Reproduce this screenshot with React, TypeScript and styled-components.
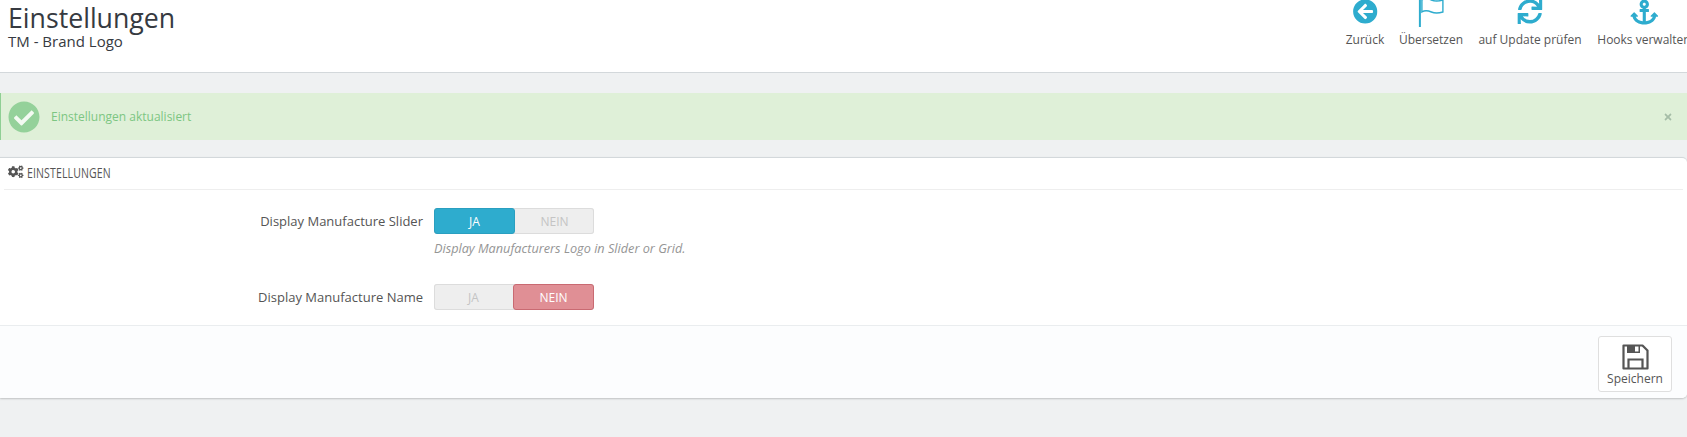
import React from "react";
import styled, { createGlobalStyle } from "styled-components";
import { FaArrowCircleLeft, FaSync, FaAnchor, FaCheckCircle, FaCogs, FaTimes } from "react-icons/fa";

const Global = createGlobalStyle`
  html, body { margin: 0; padding: 0; background: #eff1f2; height: 437px; overflow: hidden; }
  body { font-family: "Open Sans", "DejaVu Sans", sans-serif; font-size: 12px; color: #555; }
`;
const Page = styled.div`width: 1687px; height: 437px; overflow: hidden; display: flex; flex-direction: column;`;
const Header = styled.header`
  height: 72px; flex: none; background: #fff; border-bottom: 1px solid #d3d8db; display: flex;
  justify-content: space-between; overflow: hidden; padding-left: 8px;
`;
const TitleBlock = styled.div`display: flex; flex-direction: column; padding-top: 4px;`;
const Title = styled.h1`margin: 0; font-size: 26.7px; line-height: 28px; height: 27px; font-weight: 400; color: #363a41;`;
const Subtitle = styled.h2`margin: 0; font-size: 15px; line-height: 20px; font-weight: 400; color: #363a41;`;
const Toolbar = styled.nav`display: flex; margin-top: -3px; flex: none; width: 358px; position: relative; height: 60px;`;
const Tool = styled.a`
  display: flex; flex-direction: column; align-items: center; position: absolute; top: 0;
  left: ${(p: { $x: number }) => p.$x}px; transform: translateX(-50%); white-space: nowrap; color: #555;
  font-size: 12px; line-height: 16px;
`;
const ToolIcon = styled.span<{ $size?: number }>`
  color: #2eacce; height: 29px; width: 30px; display: flex; align-items: center; justify-content: center;
  font-size: ${p => p.$size ?? 25}px; margin-bottom: 6px;
`;
const Alert = styled.div`
  margin: 20px 0 17px; height: 47px; flex: none; background: #dff0d8; border-left: 1px solid #8fcf94; color: #7cc682;
  display: flex; align-items: center; padding: 0 0 0 7px; box-sizing: border-box; font-size: 12px;
`;
const AlertIcon = styled.span`
  color: #94d19a; display: flex; font-size: 32px; margin-right: 11px; background: radial-gradient(circle, #f3faf2 55%, transparent 56%); border-radius: 50%;
`;
const AlertText = styled.span`flex: 1;`;
const Close = styled.span`color: #a5bda7; display: flex; font-size: 10px; margin-right: 14px; margin-top: 1px;`;
const Panel = styled.section`
  background: #fff; border-top: 1px solid #d3d8db; border-radius: 0 5px 5px 0; box-shadow: 0 1px 2px rgba(0,0,0,.2);
  height: 241px; flex: none; display: flex; flex-direction: column; box-sizing: border-box;
`;
const Heading = styled.div`
  height: 28px; flex: none; margin: 0 4px; border-bottom: 1px solid #eee; display: flex; align-items: center; padding: 0 0 3px 4px; box-sizing: content-box;
  color: #555; font-size: 15.5px; gap: 3px;
`;
const HeadingLabel = styled.span`display: inline-block; font-size: 14px; transform: scaleX(.75); transform-origin: left center; letter-spacing: .2px;`;
const Form = styled.div`flex: 1; padding-top: 18px;`;
const Row = styled.div`display: flex; align-items: flex-start;`;
const Label = styled.label`width: 423px; text-align: right; flex: none; font-size: 13px; line-height: 26px; color: #555; padding-right: 11px;`;
const Field = styled.div`display: flex; flex-direction: column;`;
const Switch = styled.div`display: flex; width: 160px; height: 26px; border-radius: 3px; background: #eee; box-shadow: inset 0 0 0 1px #dcdcdc;`;
const Opt = styled.span<{ $on?: "yes" | "no" }>`
  flex: 1; display: flex; align-items: center; justify-content: center; font-size: 12px; border-radius: 3px; box-sizing: border-box;
  color: ${p => p.$on ? "#fff" : "#c4c4c4"};
  background: ${p => p.$on === "yes" ? "#2eacce" : p.$on === "no" ? "#e08f95" : "transparent"};
  border: ${p => p.$on === "yes" ? "1px solid #2a9fc0" : p.$on === "no" ? "1px solid #c96a72" : "none"};
`;
const Help = styled.p`margin: 5px 0 0; height: 45px; font-size: 12.7px; line-height: 18px; font-style: italic; color: #959595;`;
const Footer = styled.div`
  height: 73px; box-sizing: border-box; flex: none; background: #fcfdfe; border-top: 1px solid #eaedef; border-radius: 0 0 5px 0;
  display: flex; justify-content: flex-end; align-items: flex-start; padding: 10px 15px 0 0;
`;
const SaveButton = styled.button`
  width: 74px; height: 56px; background: #fff; border: 1px solid #dfdfdf; border-radius: 3px; padding: 7px 0 0; display: flex; flex-direction: column;
  align-items: center; font-family: inherit; font-size: 12px; line-height: 16px; color: #555;
`;
const SaveIcon = styled.span`display: flex; color: #555; margin-bottom: 1px;`;

const FlagIcon = () => (
  <svg width="27" height="30" viewBox="0 0 27 30" fill="none" stroke="#2eacce" strokeWidth="1.4">
    <path d="M2 0v30" strokeWidth="2" />
    <path d="M4 3c3-2 6-1.500 9.500 0s6.500 1.500 11.500 0v12c-5 1.500-8 1.500-11.500 0s-6.500-2-9.500 0z" />
  </svg>
);

const FloppyIcon = () => (
  <svg width="27" height="26" viewBox="0 0 27 26" fill="none" stroke="#555" strokeWidth="2.2">
    <path d="M1.500 1.500h19l5 5v18h-24z" strokeLinejoin="round" />
    <path d="M6.500 24.500v-9h14v9" />
    <path d="M5 1h13v8H5z" fill="#555" stroke="none" />
    <path d="M13 2.500h3.500v5H13z" fill="#fff" stroke="none" />
  </svg>
);

export default function App() {
  return (
    <Page>
      <Global />
      <Header>
        <TitleBlock>
          <Title>Einstellungen</Title>
          <Subtitle>TM - Brand Logo</Subtitle>
        </TitleBlock>
        <Toolbar>
          <Tool $x={36}><ToolIcon><FaArrowCircleLeft /></ToolIcon>Zurück</Tool>
          <Tool $x={102}><ToolIcon><FlagIcon /></ToolIcon>Übersetzen</Tool>
          <Tool $x={201}><ToolIcon><FaSync /></ToolIcon>auf Update prüfen</Tool>
          <Tool $x={315}><ToolIcon $size={28}><FaAnchor /></ToolIcon>Hooks verwalten</Tool>
        </Toolbar>
      </Header>
      <Alert>
        <AlertIcon><FaCheckCircle /></AlertIcon>
        <AlertText>Einstellungen aktualisiert</AlertText>
        <Close><FaTimes /></Close>
      </Alert>
      <Panel>
        <Heading>
          <FaCogs />
          <HeadingLabel>EINSTELLUNGEN</HeadingLabel>
        </Heading>
        <Form>
          <Row>
            <Label>Display Manufacture Slider</Label>
            <Field>
              <Switch><Opt $on="yes">JA</Opt><Opt>NEIN</Opt></Switch>
              <Help>Display Manufacturers Logo in Slider or Grid.</Help>
            </Field>
          </Row>
          <Row>
            <Label>Display Manufacture Name</Label>
            <Field>
              <Switch><Opt>JA</Opt><Opt $on="no">NEIN</Opt></Switch>
            </Field>
          </Row>
        </Form>
        <Footer>
          <SaveButton><SaveIcon><FloppyIcon /></SaveIcon>Speichern</SaveButton>
        </Footer>
      </Panel>
    </Page>
  );
}
